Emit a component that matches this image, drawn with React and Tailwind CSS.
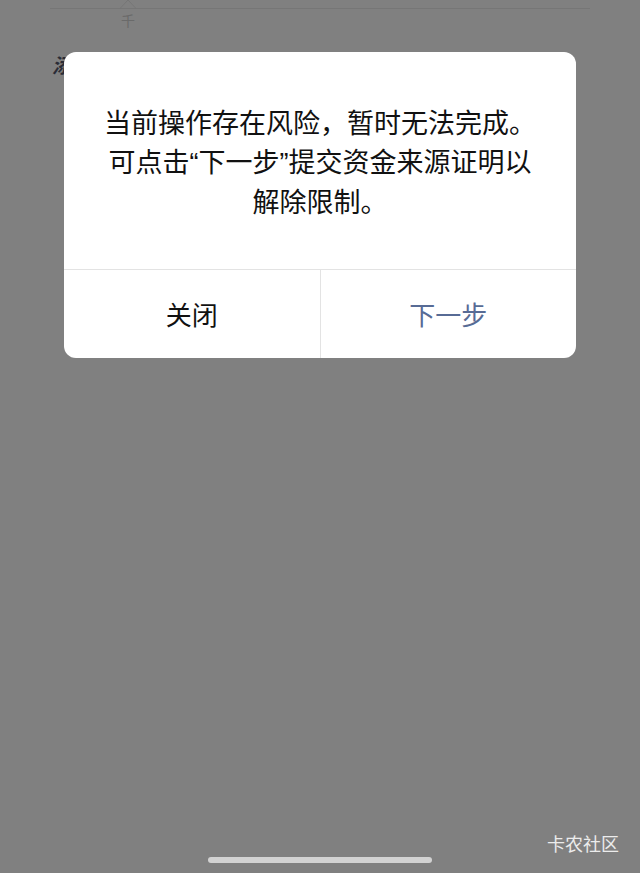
import React from "react";

const cjk = { fontFamily: '"Noto Sans CJK SC", "Noto Sans", sans-serif' };
const q = { fontFamily: '"Liberation Sans", sans-serif' };

export default function App() {
  return (
    <div
      className="relative w-[640px] h-[873px] overflow-hidden bg-[#808080]"
      style={cjk}
    >
      {/* page content behind the mask */}
      <div className="px-[50px] pt-[8px]">
        <div className="relative h-px bg-[#767676]">
          <svg
            className="absolute left-[70px] -top-[9px]"
            width="16"
            height="10"
            viewBox="0 0 16 10"
          >
            <path d="M0 9.5 L8 1 L16 9.5" fill="none" stroke="#767676" strokeWidth="1" />
          </svg>
        </div>
        <div className="ml-[71px] mt-[2px] text-[14px] leading-[18px] text-[#6a6a6a]">千</div>
        <div className="mt-[24px] ml-[2px] text-[20px] leading-[24px] font-bold italic text-[#2b2c36]">
          添加转账说明
        </div>
      </div>

      {/* dialog */}
      <div className="absolute left-[64px] top-[52px] w-[512px] rounded-[12px] bg-white overflow-hidden">
        <div className="px-[20px] pt-[51px] pb-[48px] text-center text-[27px] leading-[38.5px] text-[#111111] whitespace-nowrap">
          <div>当前操作存在风险，暂时无法完成。</div>
          <div>
            可点击<span style={q}>“</span>下一步<span style={q}>”</span>提交资金来源证明以
          </div>
          <div>解除限制。</div>
        </div>
        <div className="flex h-[89px] border-t border-[#e3e3e3]">
          <button className="flex-1 flex items-center justify-center text-[26px] text-[#111111]">
            关闭
          </button>
          <div className="w-px bg-[#e3e3e3]" />
          <button className="flex-1 flex items-center justify-center text-[26px] text-[#576b95]">
            下一步
          </button>
        </div>
      </div>

      {/* watermark */}
      <div className="absolute right-[21px] bottom-[19px] text-[18px] leading-[22px] text-[#ececec]">
        卡农社区
      </div>

      {/* home indicator */}
      <div className="absolute left-[208px] bottom-[10px] w-[224px] h-[6px] rounded-full bg-[#d2d2d2]" />
    </div>
  );
}
